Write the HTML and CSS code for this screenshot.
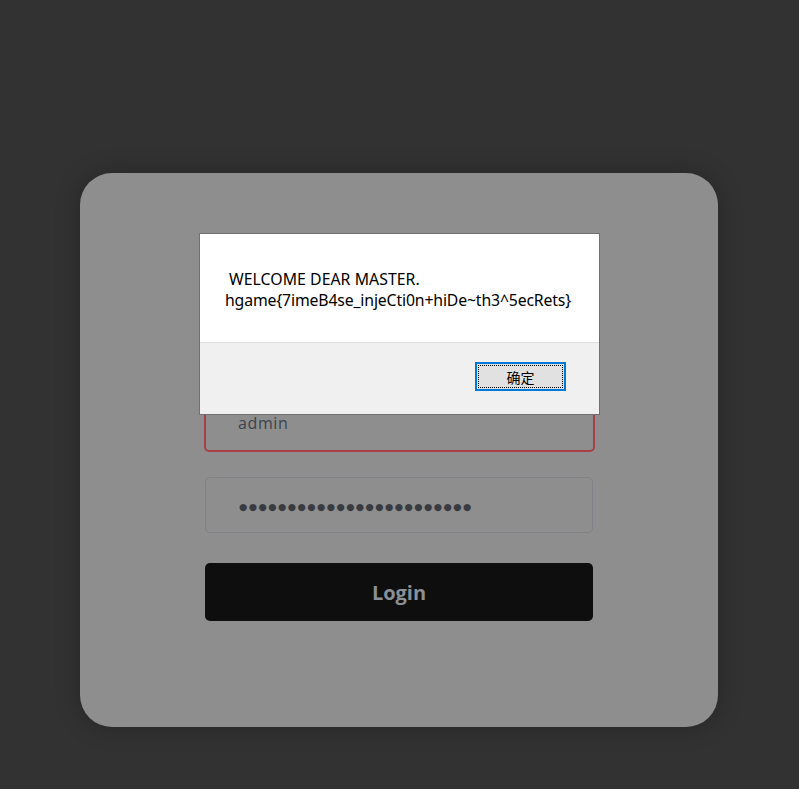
FILE: index.html
```html
<!DOCTYPE html>
<html>
<head>
<meta charset="utf-8">
<link rel="stylesheet" href="styles.css">
</head>
<body>
<div class="page">
  <div class="card">
    <form class="form">
      <div class="field field-user"><span class="value">admin</span></div>
      <div class="field field-pass"><span class="dots">●●●●●●●●●●●●●●●●●●●●●●●●</span></div>
      <div class="login">Login</div>
    </form>
  </div>
</div>
<div class="dialog">
  <div class="dialog-body">
    <div class="line1">WELCOME DEAR MASTER.</div>
    <div class="line2">hgame{7imeB4se_injeCti0n+hiDe~th3^5ecRets}</div>
  </div>
  <div class="dialog-foot">
    <div class="ok"><span class="ok-inner">确定</span></div>
  </div>
</div>
</body>
</html>
```

FILE: styles.css
```css
html, body {
  margin: 0;
  padding: 0;
  background: #323232;
  width: 799px;
  height: 789px;
  overflow: hidden;
}
.page {
  padding: 173px 0 0 80px;
}
.card {
  width: 638px;
  height: 554px;
  background: #8e8e8e;
  border-radius: 32px;
  box-shadow: 0 0 24px rgba(0,0,0,0.25);
  box-sizing: border-box;
  padding: 224px 0 0 124px;
}
.form {
  display: flex;
  flex-direction: column;
  width: 390px;
  margin: 0;
}
.field {
  height: 55px;
  box-sizing: border-box;
  border-radius: 5px;
  display: flex;
  align-items: center;
  padding-left: 33px;
}
.field-user {
  border: 2px solid #a84048;
  width: 391px;
  padding-left: 32px;
}
.field-pass {
  margin-top: 25px;
  margin-left: 1px;
  width: 388px;
  border: 1px solid #7f8186;
  height: 56px;
}
.value {
  font-family: "Open Sans", sans-serif;
  font-size: 16px;
  color: #3c434c;
  letter-spacing: 0.6px;
  position: relative;
  top: -2px;
}
.dots {
  font-family: "DejaVu Sans", sans-serif;
  font-size: 9.5px;
  color: #383b40;
  letter-spacing: 1.45px;
  position: relative;
  top: 1px;
}
.login {
  margin-top: 30px;
  margin-left: 1px;
  width: 388px;
  height: 58px;
  background: #0e0e0e;
  border-radius: 5px;
  display: flex;
  align-items: center;
  justify-content: center;
  font-family: "Open Sans", sans-serif;
  font-weight: 700;
  font-size: 20px;
  color: #8a9097;
}
.dialog {
  position: absolute;
  left: 199px;
  top: 233px;
  width: 401px;
  height: 182px;
  box-sizing: border-box;
  border: 1px solid #707070;
  background: #f0f0f0;
  font-family: "Noto Sans", "Noto Sans CJK SC", sans-serif;
  font-size: 15.8px;
  color: #000;
}
.dialog-body {
  background: #fff;
  height: 109px;
  border-bottom: 1px solid #dfdfdf;
  padding: 35px 0 0 25px;
  box-sizing: border-box;
  line-height: 21px;
}
.line1 {
  padding-left: 4px;
  letter-spacing: 0.05px;
}
.line2 {
  letter-spacing: -0.15px;
}
.dialog-foot {
  display: flex;
  justify-content: flex-end;
  padding: 19px 33px 0 0;
}
.ok {
  width: 91px;
  height: 29px;
  box-sizing: border-box;
  border: 2px solid #0078d7;
  background: #e1e1e1;
  padding: 1px;
}
.ok-inner {
  display: flex;
  align-items: center;
  justify-content: center;
  height: 100%;
  box-sizing: border-box;
  border: 1px dotted #000;
  font-family: "Noto Sans CJK SC", sans-serif;
  font-size: 14px;
}
```
